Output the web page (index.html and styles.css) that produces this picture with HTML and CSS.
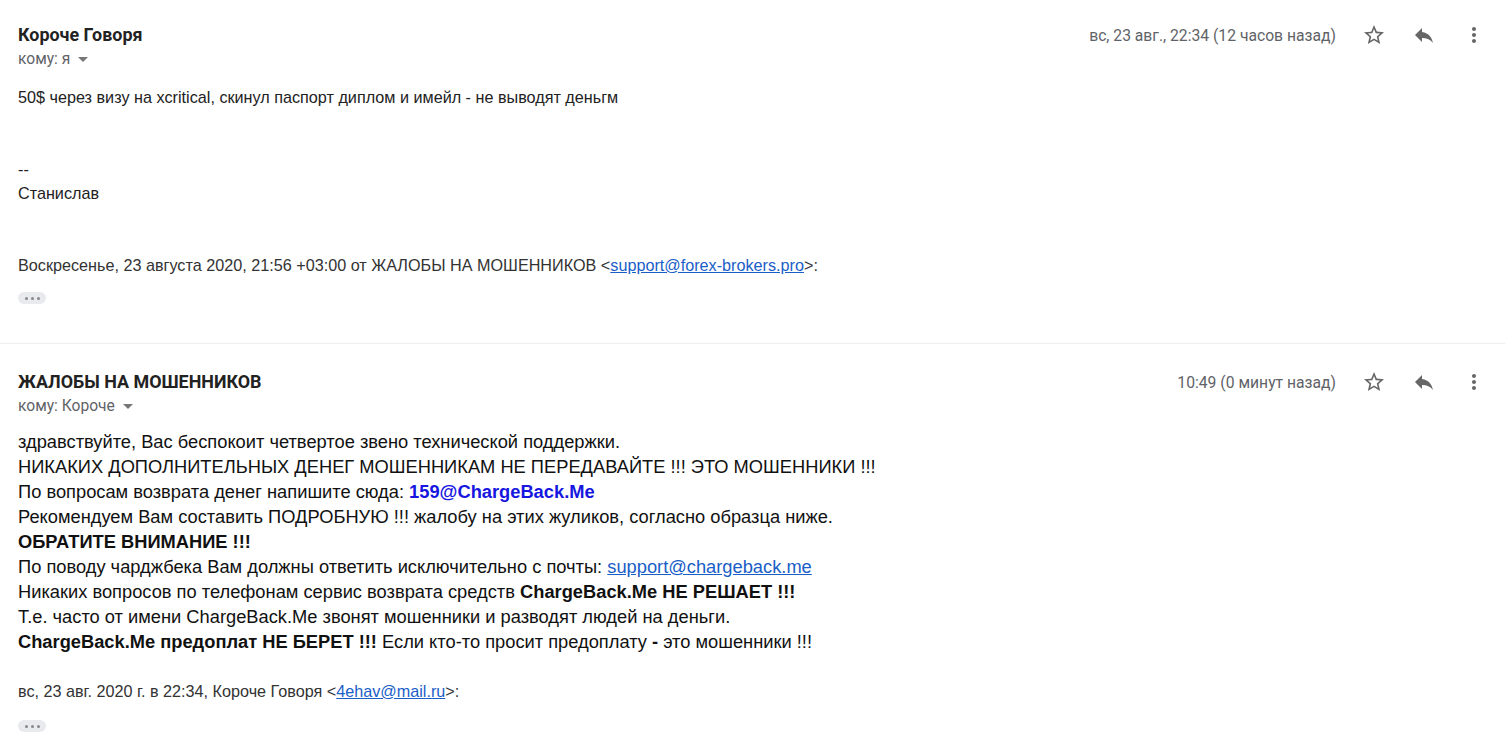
FILE: index.html
```html
<!DOCTYPE html>
<html lang="ru">
<head>
<meta charset="utf-8">
<title>Письма</title>
<link rel="stylesheet" href="styles.css">
</head>
<body>
<div class="thread">
  <div class="msg msg-first">
    <div class="head">
      <div class="who">
        <div class="name">Короче Говоря</div>
        <div class="to">кому: я <span class="caret"></span></div>
      </div>
      <div class="meta">
        <span class="date">вс, 23 авг., 22:34 (12 часов назад)</span>
        <span class="ico"><svg viewBox="0 0 24 24" width="24" height="24"><path d="M22 9.24l-7.19-.62L12 2 9.19 8.63 2 9.24l5.46 4.73L5.82 21 12 17.27 18.18 21l-1.63-7.03L22 9.24zM12 15.4l-3.76 2.27 1-4.28-3.32-2.88 4.38-.38L12 6.1l1.71 4.04 4.38.38-3.32 2.88 1 4.28L12 15.4z"/></svg></span>
        <span class="ico"><svg viewBox="0 0 24 24" width="24" height="24"><path d="M10 9V5l-7 7 7 7v-4.1c5 0 8.5 1.6 11 5.1-1-5-4-10-11-11z"/></svg></span>
        <span class="ico"><svg viewBox="0 0 24 24" width="24" height="24"><path d="M12 8c1.1 0 2-.9 2-2s-.9-2-2-2-2 .9-2 2 .9 2 2 2zm0 2c-1.1 0-2 .9-2 2s.9 2 2 2 2-.9 2-2-.9-2-2-2zm0 6c-1.1 0-2 .9-2 2s.9 2 2 2 2-.9 2-2-.9-2-2-2z"/></svg></span>
      </div>
    </div>
    <div class="body body-a">
      <div>50$ через визу на xcritical, скинул паспорт диплом и имейл - не выводят деньгм</div>
      <div><br></div>
      <div><br></div>
      <div>--</div>
      <div>Станислав</div>
    </div>
    <div class="quote quote-a">Воскресенье, 23 августа 2020, 21:56 +03:00 от ЖАЛОБЫ НА МОШЕННИКОВ &lt;<a href="#">support@forex-brokers.pro</a>&gt;:</div>
    <div class="more more-a"><span></span><span></span><span></span></div>
  </div>

  <div class="msg msg-second">
    <div class="head">
      <div class="who">
        <div class="name">ЖАЛОБЫ НА МОШЕННИКОВ</div>
        <div class="to">кому: Короче <span class="caret"></span></div>
      </div>
      <div class="meta">
        <span class="date">10:49 (0 минут назад)</span>
        <span class="ico"><svg viewBox="0 0 24 24" width="24" height="24"><path d="M22 9.24l-7.19-.62L12 2 9.19 8.63 2 9.24l5.46 4.73L5.82 21 12 17.27 18.18 21l-1.63-7.03L22 9.24zM12 15.4l-3.76 2.27 1-4.28-3.32-2.88 4.38-.38L12 6.1l1.71 4.04 4.38.38-3.32 2.88 1 4.28L12 15.4z"/></svg></span>
        <span class="ico"><svg viewBox="0 0 24 24" width="24" height="24"><path d="M10 9V5l-7 7 7 7v-4.1c5 0 8.5 1.6 11 5.1-1-5-4-10-11-11z"/></svg></span>
        <span class="ico"><svg viewBox="0 0 24 24" width="24" height="24"><path d="M12 8c1.1 0 2-.9 2-2s-.9-2-2-2-2 .9-2 2 .9 2 2 2zm0 2c-1.1 0-2 .9-2 2s.9 2 2 2 2-.9 2-2-.9-2-2-2zm0 6c-1.1 0-2 .9-2 2s.9 2 2 2 2-.9 2-2-.9-2-2-2z"/></svg></span>
      </div>
    </div>
    <div class="body body-b">
      <div>здравствуйте, Вас беспокоит четвертое звено технической поддержки.</div>
      <div>НИКАКИХ ДОПОЛНИТЕЛЬНЫХ ДЕНЕГ МОШЕННИКАМ НЕ ПЕРЕДАВАЙТЕ !!! ЭТО МОШЕННИКИ !!!</div>
      <div>По вопросам возврата денег напишите сюда: <b class="blue">159@ChargeBack.Me</b></div>
      <div>Рекомендуем Вам составить ПОДРОБНУЮ !!! жалобу на этих жуликов, согласно образца ниже.</div>
      <div><b>ОБРАТИТЕ ВНИМАНИЕ !!!</b></div>
      <div>По поводу чарджбека Вам должны ответить исключительно с почты: <a href="#">support@chargeback.me</a></div>
      <div>Никаких вопросов по телефонам сервис возврата средств <b>ChargeBack.Me НЕ РЕШАЕТ !!!</b></div>
      <div>Т.е. часто от имени ChargeBack.Me звонят мошенники и разводят людей на деньги.</div>
      <div><b>ChargeBack.Me предоплат НЕ БЕРЕТ !!!</b> Если кто-то просит предоплату <b>-</b> это мошенники !!!</div>
    </div>
    <div class="quote quote-b">вс, 23 авг. 2020 г. в 22:34, Короче Говоря &lt;<a href="#">4ehav@mail.ru</a>&gt;:</div>
    <div class="more more-b"><span></span><span></span><span></span></div>
  </div>
</div>
</body>
</html>
```
FILE: styles.css
```css
* { box-sizing: border-box; }
html, body { margin: 0; padding: 0; background: #fff; }
body { font-family: Roboto, Arial, sans-serif; color: #222; overflow: hidden; }

.thread { width: 1505px; }

.msg { padding: 0 18px; }
.msg-first { padding-top: 24px; border-bottom: 1px solid #eceff1; height: 344px; }
.msg-second { padding-top: 27px; }

.head { display: flex; justify-content: space-between; align-items: flex-start; }
.who { display: flex; flex-direction: column; }
.name { font-family: Roboto, Arial, sans-serif; font-weight: 700; font-size: 17.9px; line-height: 22px; color: #222; }
.to { font-family: Roboto, Arial, sans-serif; font-size: 15.6px; line-height: 20px; color: #5f6368; margin-top: 3px; display: flex; align-items: center; gap: 6px; }
.caret { width: 0; height: 0; border-left: 5px solid transparent; border-right: 5px solid transparent; border-top: 5px solid #777; margin-left: 2px; }

.meta { display: flex; align-items: center; height: 22px; margin-right: -12px; }
.date { font-family: Roboto, Arial, sans-serif; font-size: 15.7px; color: #5f6368; margin-right: 13px; }
.ico { width: 50px; height: 22px; display: flex; align-items: center; justify-content: center; }
.ico svg { fill: #666; }

.body { font-family: Arial, "Liberation Sans", sans-serif; color: #222; }
.body-a { font-size: 16.2px; line-height: 24px; margin-top: 16px; }
.body-b { font-size: 18.3px; line-height: 25px; margin-top: 13px; color: #111; }
.blue { color: #1616e0; }
.body a, .quote a { color: #1a5ec7; text-decoration: underline; }
b { font-weight: 700; }

.quote { font-family: Arial, "Liberation Sans", sans-serif; color: #333; font-size: 16.2px; line-height: 24px; }
.quote-a { margin-top: 48px; }
.quote-b { margin-top: 25px; }

.more { width: 28px; height: 12px; border-radius: 6px; background: #e8eaed; display: flex; align-items: center; justify-content: center; gap: 3px; }
.more-a { margin-top: 15px; }
.more-b { margin-top: 17px; }
.more span { width: 3px; height: 3px; border-radius: 50%; background: #888; }
```
